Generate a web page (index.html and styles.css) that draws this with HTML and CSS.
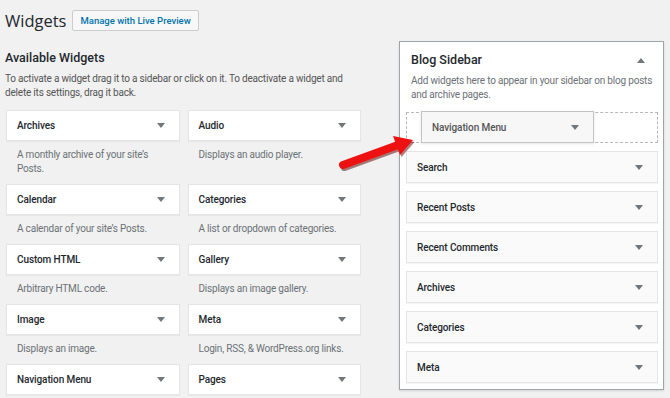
FILE: index.html
```html
<!DOCTYPE html>
<html lang="en">
<head>
    <meta charset="UTF-8">
    <meta name="viewport" content="width=device-width, initial-scale=1.0">
    <title>Widgets</title>
    <link rel="stylesheet" href="styles.css">
</head>
<body>
    <div class="page">
        <div class="head">
            <h1>Widgets</h1>
            <a class="btn" href="#">Manage with Live Preview</a>
        </div>

        <div class="main">
            <section class="available">
                <h2>Available Widgets</h2>
                <p class="intro">To activate a widget drag it to a sidebar or click on it. To deactivate a widget and delete its settings, drag it back.</p>

                <div class="widget-grid">
                    <div class="cell">
                        <div class="widget-top"><span>Archives</span><i class="caret"></i></div>
                        <p class="desc">A monthly archive of your site’s Posts.</p>
                    </div>
                    <div class="cell">
                        <div class="widget-top"><span>Audio</span><i class="caret"></i></div>
                        <p class="desc">Displays an audio player.</p>
                    </div>
                    <div class="cell">
                        <div class="widget-top"><span>Calendar</span><i class="caret"></i></div>
                        <p class="desc">A calendar of your site’s Posts.</p>
                    </div>
                    <div class="cell">
                        <div class="widget-top"><span>Categories</span><i class="caret"></i></div>
                        <p class="desc">A list or dropdown of categories.</p>
                    </div>
                    <div class="cell">
                        <div class="widget-top"><span>Custom HTML</span><i class="caret"></i></div>
                        <p class="desc">Arbitrary HTML code.</p>
                    </div>
                    <div class="cell">
                        <div class="widget-top"><span>Gallery</span><i class="caret"></i></div>
                        <p class="desc">Displays an image gallery.</p>
                    </div>
                    <div class="cell">
                        <div class="widget-top"><span>Image</span><i class="caret"></i></div>
                        <p class="desc">Displays an image.</p>
                    </div>
                    <div class="cell">
                        <div class="widget-top"><span>Meta</span><i class="caret"></i></div>
                        <p class="desc">Login, RSS, &amp; WordPress.org links.</p>
                    </div>
                    <div class="cell">
                        <div class="widget-top"><span>Navigation Menu</span><i class="caret"></i></div>
                    </div>
                    <div class="cell">
                        <div class="widget-top"><span>Pages</span><i class="caret"></i></div>
                    </div>
                </div>
            </section>

            <section class="sidebars">
                <div class="sidebar-box">
                    <div class="sidebar-head">
                        <h3>Blog Sidebar</h3>
                        <i class="caret up"></i>
                    </div>
                    <p class="sidebar-desc">Add widgets here to appear in your sidebar on blog posts and archive pages.</p>

                    <div class="sidebar-list">
                        <div class="drop">
                            <div class="widget-top dragged"><span>Navigation Menu</span><i class="caret"></i></div>
                        </div>
                        <div class="widget-top in-sidebar"><span>Search</span><i class="caret"></i></div>
                        <div class="widget-top in-sidebar"><span>Recent Posts</span><i class="caret"></i></div>
                        <div class="widget-top in-sidebar"><span>Recent Comments</span><i class="caret"></i></div>
                        <div class="widget-top in-sidebar"><span>Archives</span><i class="caret"></i></div>
                        <div class="widget-top in-sidebar"><span>Categories</span><i class="caret"></i></div>
                        <div class="widget-top in-sidebar"><span>Meta</span><i class="caret"></i></div>
                    </div>
                </div>
                <div class="sidebar-box next"></div>
            </section>
        </div>

        <!-- red pointer drawn over the screenshot -->
        <svg class="pointer" width="90" height="50" viewBox="0 0 90 50">
            <g fill="#5a0000" opacity="0.5" transform="translate(1.5,2)">
                <line x1="13" y1="40" x2="68" y2="20" stroke="#5a0000" stroke-width="8" stroke-linecap="round"/>
                <polygon points="83,15 70,30 63,11"/>
            </g>
            <line x1="13" y1="40" x2="68" y2="20" stroke="#ee1111" stroke-width="8" stroke-linecap="round"/>
            <polygon points="83,15 70,30 63,11" fill="#ee1111"/>
        </svg>
    </div>
</body>
</html>
```

FILE: styles.css
```css
body {
    margin: 0;
    background-color: #f1f1f1;
    font-family: Roboto, "Open Sans", Arial, sans-serif;
    color: #444;
    overflow: hidden;
}

.page {
    position: relative;
    padding: 10px 0 0 5px;
    height: 388px;
}

.head {
    display: flex;
    align-items: center;
    gap: 6px;
    height: 21px;
}

.head h1 {
    margin: 0;
    font-family: "Open Sans", Arial, sans-serif;
    font-size: 16.5px;
    font-weight: 400;
    color: #23282d;
    line-height: 21px;
}

.btn {
    display: inline-block;
    height: 19px;
    line-height: 19px;
    padding: 0 7px;
    border: 1px solid #ccc;
    border-radius: 2px;
    background-color: #f7f7f7;
    color: #0073aa;
    font-size: 9.5px;
    font-weight: 500;
    text-decoration: none;
}

.main {
    display: flex;
    align-items: flex-start;
    gap: 38px;
    margin-top: 10px;
}

.available {
    width: 356px;
}

.available h2 {
    margin: 7px 0 0;
    font-size: 12.5px;
    font-weight: 500;
    line-height: 20px;
    color: #23282d;
}

.intro {
    margin: 4px 0 10px;
    font-size: 10px;
    letter-spacing: -0.2px;
    line-height: 14px;
    color: #555;
}

.widget-grid {
    display: grid;
    grid-template-columns: 1fr 1fr;
    column-gap: 8px;
    width: 355px;
    margin-left: 1px;
}

.widget-top {
    display: flex;
    align-items: center;
    justify-content: space-between;
    height: 29px;
    padding: 0 14px 0 10px;
    border: 1px solid #e5e5e5;
    background-color: #fff;
    box-shadow: 0 1px 1px rgba(0, 0, 0, 0.04);
    font-size: 10px;
    letter-spacing: -0.1px;
    font-weight: 500;
    color: #23282d;
}

.caret {
    width: 0;
    height: 0;
    border-left: 4px solid transparent;
    border-right: 4px solid transparent;
    border-top: 5px solid #72777c;
}

.caret.up {
    border-top: none;
    border-bottom: 5px solid #72777c;
}

.desc {
    margin: 0;
    padding: 7px 10px 8px 11px;
    font-size: 10px;
    letter-spacing: -0.2px;
    line-height: 14px;
    color: #6c7176;
}

.sidebars {
    width: 265px;
}

.sidebar-box {
    position: relative;
    border: 1px solid #a0a5aa;
    background-color: #fff;
    box-shadow: 0 1px 2px rgba(0, 0, 0, 0.12);
    padding-bottom: 6px;
}

.sidebar-head {
    display: flex;
    align-items: center;
    justify-content: space-between;
    padding: 8px 18px 0 11px;
}

.sidebar-head h3 {
    margin: 0;
    font-size: 12.5px;
    font-weight: 500;
    line-height: 20px;
    color: #23282d;
}

.sidebar-desc {
    margin: 4px 0 0;
    padding: 0 6px 0 11px;
    font-size: 10px;
    letter-spacing: -0.2px;
    line-height: 14px;
    color: #6c7176;
}

.sidebar-list {
    display: flex;
    flex-direction: column;
    gap: 8px;
    margin-top: 10px;
    padding: 0 5px 0 6px;
}

.drop {
    position: relative;
    height: 29px;
    border: 1px dashed #b4b9be;
}

.widget-top.in-sidebar {
    height: 30px;
    background-color: #fafafa;
}

.widget-top.dragged {
    position: absolute;
    left: 14px;
    top: -2px;
    width: 147px;
    height: 30px;
    border-color: #c3c3c3;
    background-color: #f7f7f7;
    color: #555;
    box-shadow: 0 1px 3px rgba(0, 0, 0, 0.1);
}

.sidebar-box.next {
    margin-top: 8px;
    height: 20px;
}

.pointer {
    position: absolute;
    left: 330px;
    top: 125px;
}
```
